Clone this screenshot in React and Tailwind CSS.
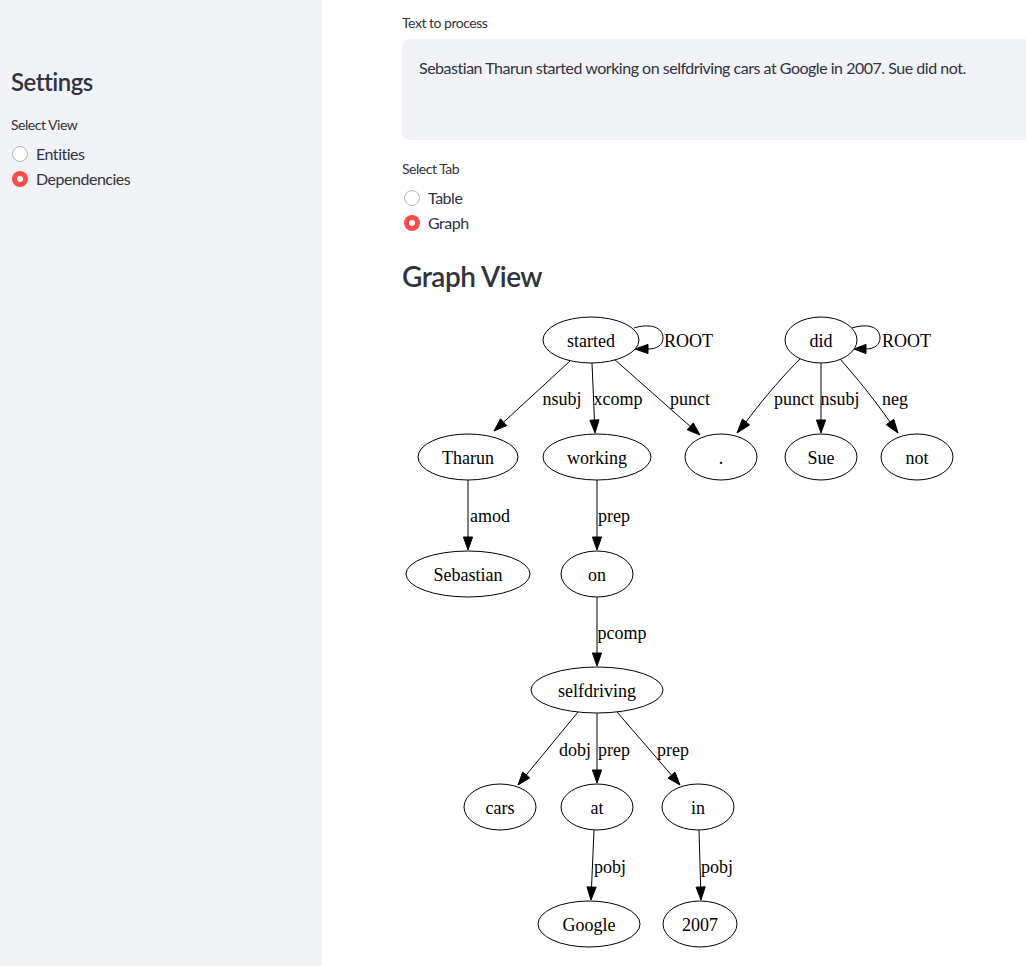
import React from "react";

const nodes = [
  { id: "started", x: 591, y: 341, rx: 48 },
  { id: "did", x: 821, y: 341, rx: 36 },
  { id: "Tharun", x: 468, y: 458, rx: 50 },
  { id: "working", x: 597, y: 458, rx: 54 },
  { id: "dot", label: ".", x: 721, y: 458, rx: 36 },
  { id: "Sue", x: 821, y: 458, rx: 36 },
  { id: "not", x: 917, y: 458, rx: 36 },
  { id: "Sebastian", x: 468, y: 575, rx: 62 },
  { id: "on", x: 597, y: 575, rx: 36 },
  { id: "selfdriving", x: 597, y: 691, rx: 66 },
  { id: "cars", x: 500, y: 808, rx: 36 },
  { id: "at", x: 597, y: 808, rx: 36 },
  { id: "in", x: 698, y: 808, rx: 36 },
  { id: "Google", x: 589, y: 925, rx: 51 },
  { id: "2007", x: 700, y: 925, rx: 37 },
];

// straight edges: start point, arrow tip
const edges = [
  { from: [570, 362], to: [494, 432] },
  { from: [592, 364], to: [595, 434] },
  { from: [614, 360], to: [700, 436] },
  { from: [821, 364], to: [821, 434] },
  { from: [468, 481], to: [468, 551] },
  { from: [597, 481], to: [597, 551] },
  { from: [597, 598], to: [597, 667] },
  { from: [578, 713], to: [518, 786] },
  { from: [597, 714], to: [597, 784] },
  { from: [617, 713], to: [680, 786] },
  { from: [594, 831], to: [591, 901] },
  { from: [699, 831], to: [701, 901] },
];

// curved edges + self loops: path up to arrow base, then arrow base -> tip
const curves = [
  { d: "M800,360 C786,374 766,396 746,423", base: [746, 423], tip: [737, 434] },
  { d: "M840,360 C856,378 874,400 890,423", base: [890, 423], tip: [898, 434] },
  { d: "M634,329 C650,324 663,328 663,339 C663,346 657,350 648,350", base: [648, 350], tip: [635, 350] },
  { d: "M852,329 C868,324 880,328 880,339 C880,346 874,350 866,350", base: [866, 350], tip: [854, 350] },
];

const labels = [
  { t: "ROOT", x: 664, y: 348, a: "start" },
  { t: "ROOT", x: 882, y: 348, a: "start" },
  { t: "nsubj", x: 562, y: 406 },
  { t: "xcomp", x: 618, y: 406 },
  { t: "punct", x: 690, y: 406 },
  { t: "punct", x: 794, y: 406 },
  { t: "nsubj", x: 840, y: 406 },
  { t: "neg", x: 895, y: 406 },
  { t: "amod", x: 490, y: 523 },
  { t: "prep", x: 614, y: 523 },
  { t: "pcomp", x: 622, y: 640 },
  { t: "dobj", x: 575, y: 757 },
  { t: "prep", x: 614, y: 757 },
  { t: "prep", x: 673, y: 757 },
  { t: "pobj", x: 610, y: 874 },
  { t: "pobj", x: 717, y: 874 },
];

function arrowHead(base, tip) {
  const dx = tip[0] - base[0];
  const dy = tip[1] - base[1];
  const len = Math.hypot(dx, dy) || 1;
  const nx = (-dy / len) * 4.6;
  const ny = (dx / len) * 4.6;
  return `${tip[0]},${tip[1]} ${base[0] + nx},${base[1] + ny} ${base[0] - nx},${base[1] - ny}`;
}

function baseOf(from, to) {
  const dx = to[0] - from[0];
  const dy = to[1] - from[1];
  const len = Math.hypot(dx, dy) || 1;
  return [to[0] - (dx / len) * 13, to[1] - (dy / len) * 13];
}

function DependencyGraph() {
  return (
    <svg width="600" height="661" className="block tracking-normal">
      <g transform="translate(-402,-305)" fontFamily="'Liberation Serif', 'Times New Roman', serif" fontSize="18">
        {edges.map((e, i) => {
          const b = baseOf(e.from, e.to);
          return (
            <g key={i}>
              <path d={`M${e.from[0]},${e.from[1]} L${b[0]},${b[1]}`} stroke="black" fill="none" />
              <polygon points={arrowHead(b, e.to)} fill="black" stroke="black" />
            </g>
          );
        })}
        {curves.map((c, i) => (
          <g key={"c" + i}>
            <path d={c.d} stroke="black" fill="none" />
            <polygon points={arrowHead(c.base, c.tip)} fill="black" stroke="black" />
          </g>
        ))}
        {nodes.map((n) => (
          <g key={n.id}>
            <ellipse cx={n.x} cy={n.y} rx={n.rx} ry={23} fill="white" stroke="black" />
            <text x={n.x} y={n.y + 7} textAnchor="middle" fill="black">
              {n.label ?? n.id}
            </text>
          </g>
        ))}
        {labels.map((l, i) => (
          <text key={"l" + i} x={l.x} y={l.y} textAnchor={l.a ?? "middle"} fill="black">
            {l.t}
          </text>
        ))}
      </g>
    </svg>
  );
}

function Radio({ label, checked }) {
  return (
    <div className="flex items-center h-[25px] gap-2">
      {checked ? (
        <span className="w-4 h-4 rounded-full bg-[#ff4b4b] flex items-center justify-center">
          <span className="w-[6px] h-[6px] rounded-full bg-white" />
        </span>
      ) : (
        <span className="w-4 h-4 rounded-full border border-[#b4b6bd] bg-white" />
      )}
      <span className="text-[16px] text-[#31333f]">{label}</span>
    </div>
  );
}

export default function App() {
  return (
    <div className="flex w-[1026px] h-[966px] overflow-hidden bg-white text-[#31333f] font-['Lato',sans-serif] tracking-[-0.03em]">
      <aside className="w-[322px] shrink-0 bg-[#f0f2f6] px-[11px] pt-[66px]">
        <h2 className="text-[24px] leading-[32px] font-semibold">Settings</h2>
        <div className="mt-[17px] text-[14px] leading-[20px]">Select View</div>
        <div className="mt-[6px] pl-[1px]">
          <Radio label="Entities" />
          <Radio label="Dependencies" checked />
        </div>
      </aside>
      <main className="shrink-0 w-[816px] pl-[80px] pt-[13px]">
        <div className="text-[14px] leading-[20px]">Text to process</div>
        <div className="mt-[6px] h-[101px] w-[736px] rounded-lg bg-[#f0f2f6] pl-[17px] pt-[17px] text-[16px] leading-[24px]">
          Sebastian Tharun started working on selfdriving cars at Google in 2007. Sue did not.
        </div>
        <div className="mt-[19px] text-[14px] leading-[20px]">Select Tab</div>
        <div className="mt-[6px] pl-[2px]">
          <Radio label="Table" />
          <Radio label="Graph" checked />
        </div>
        <h3 className="mt-[23px] text-[28px] leading-[36px] font-semibold">Graph View</h3>
        <div className="mt-[10px]">
          <DependencyGraph />
        </div>
      </main>
    </div>
  );
}
